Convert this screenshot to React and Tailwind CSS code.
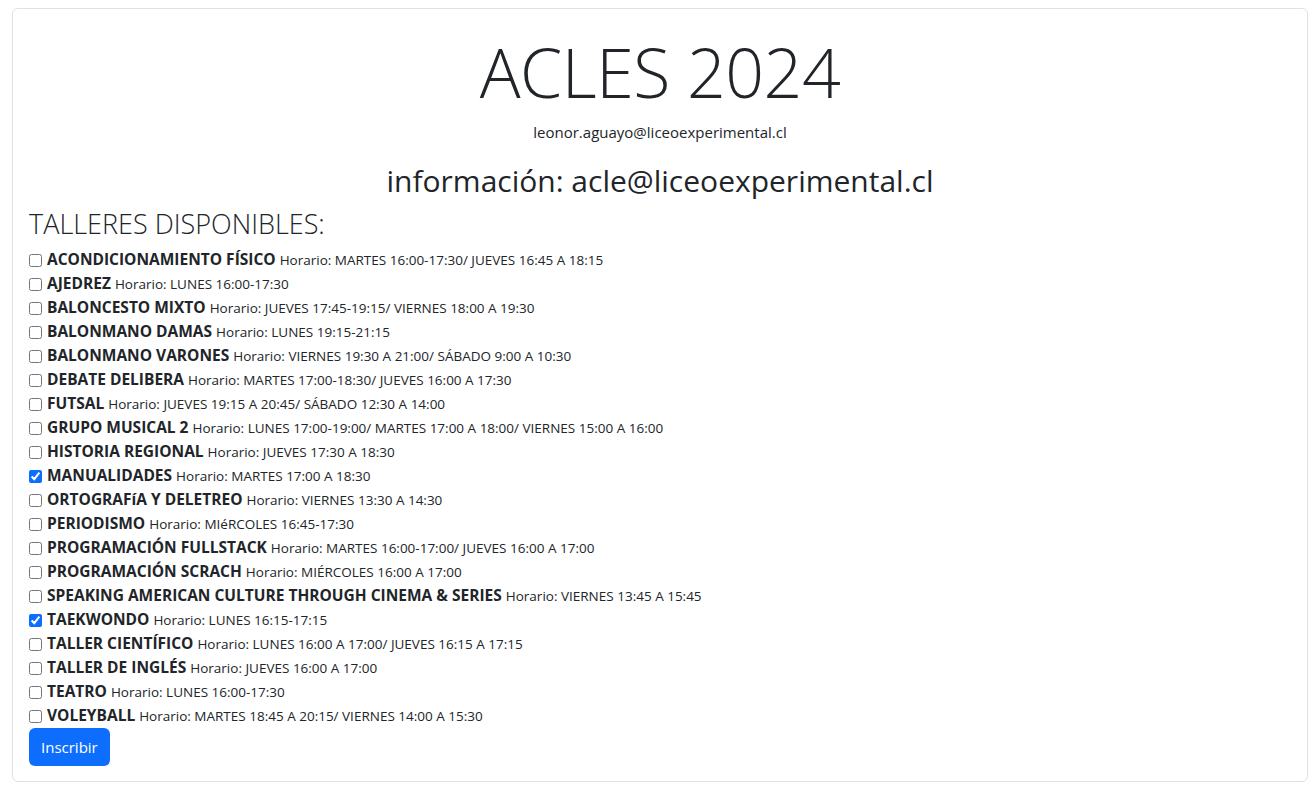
const talleres = [
  { name: 'ACONDICIONAMIENTO FÍSICO', horario: 'MARTES 16:00-17:30/ JUEVES 16:45 A 18:15' },
  { name: 'AJEDREZ', horario: 'LUNES 16:00-17:30' },
  { name: 'BALONCESTO MIXTO', horario: 'JUEVES 17:45-19:15/ VIERNES 18:00 A 19:30' },
  { name: 'BALONMANO DAMAS', horario: 'LUNES 19:15-21:15' },
  { name: 'BALONMANO VARONES', horario: 'VIERNES 19:30 A 21:00/ SÁBADO 9:00 A 10:30' },
  { name: 'DEBATE DELIBERA', horario: 'MARTES 17:00-18:30/ JUEVES 16:00 A 17:30' },
  { name: 'FUTSAL', horario: 'JUEVES 19:15 A 20:45/ SÁBADO 12:30 A 14:00' },
  { name: 'GRUPO MUSICAL 2', horario: 'LUNES 17:00-19:00/ MARTES 17:00 A 18:00/ VIERNES 15:00 A 16:00' },
  { name: 'HISTORIA REGIONAL', horario: 'JUEVES 17:30 A 18:30' },
  { name: 'MANUALIDADES', horario: 'MARTES 17:00 A 18:30', checked: true },
  { name: 'ORTOGRAFíA Y DELETREO', horario: 'VIERNES 13:30 A 14:30' },
  { name: 'PERIODISMO', horario: 'MIéRCOLES 16:45-17:30' },
  { name: 'PROGRAMACIÓN FULLSTACK', horario: 'MARTES 16:00-17:00/ JUEVES 16:00 A 17:00' },
  { name: 'PROGRAMACIÓN SCRACH', horario: 'MIÉRCOLES 16:00 A 17:00' },
  { name: 'SPEAKING AMERICAN CULTURE THROUGH CINEMA & SERIES', horario: 'VIERNES 13:45 A 15:45' },
  { name: 'TAEKWONDO', horario: 'LUNES 16:15-17:15', checked: true },
  { name: 'TALLER CIENTÍFICO', horario: 'LUNES 16:00 A 17:00/ JUEVES 16:15 A 17:15' },
  { name: 'TALLER DE INGLÉS', horario: 'JUEVES 16:00 A 17:00' },
  { name: 'TEATRO', horario: 'LUNES 16:00-17:30' },
  { name: 'VOLEYBALL', horario: 'MARTES 18:45 A 20:15/ VIERNES 14:00 A 15:30' },
];

export default function App() {
  return (
    <div className="min-h-[796px] bg-white pt-[8px] pl-[12px] text-[#212529] font-['Open_Sans',sans-serif]">
      <div className="w-[1296px] h-[774px] border border-[#dee2e6] rounded-[6px] px-[16px] pt-[21px]">
        <h1 className="text-center text-[68px] font-light leading-[84px] tracking-[-0.5px]">ACLES 2024</h1>
        <p className="text-center text-[15px] mt-[7px] leading-[22px]">leonor.aguayo@liceoexperimental.cl</p>
        <h2 className="text-center text-[30px] leading-[38px] mt-[19px]">información: acle@liceoexperimental.cl</h2>
        <h3 className="text-[27px] font-light leading-[34px] mt-[7px]">TALLERES DISPONIBLES:</h3>
        <div className="mt-[7px] flex flex-col">
          {talleres.map((t) => (
            <label key={t.name} className="flex items-center h-[24px] whitespace-nowrap">
              <input type="checkbox" defaultChecked={t.checked} className="w-[13px] h-[13px] m-0 mr-[5px] accent-[#0d6efd]" />
              <span className="text-[15.5px] font-bold">{t.name}</span>
              <span className="text-[13.5px] ml-[4px]">Horario: {t.horario}</span>
            </label>
          ))}
        </div>
        <button type="button" className="mt-0 h-[38px] px-[12px] rounded-[6px] bg-[#0d6efd] text-white text-[15px]">
          Inscribir
        </button>
      </div>
    </div>
  );
}
